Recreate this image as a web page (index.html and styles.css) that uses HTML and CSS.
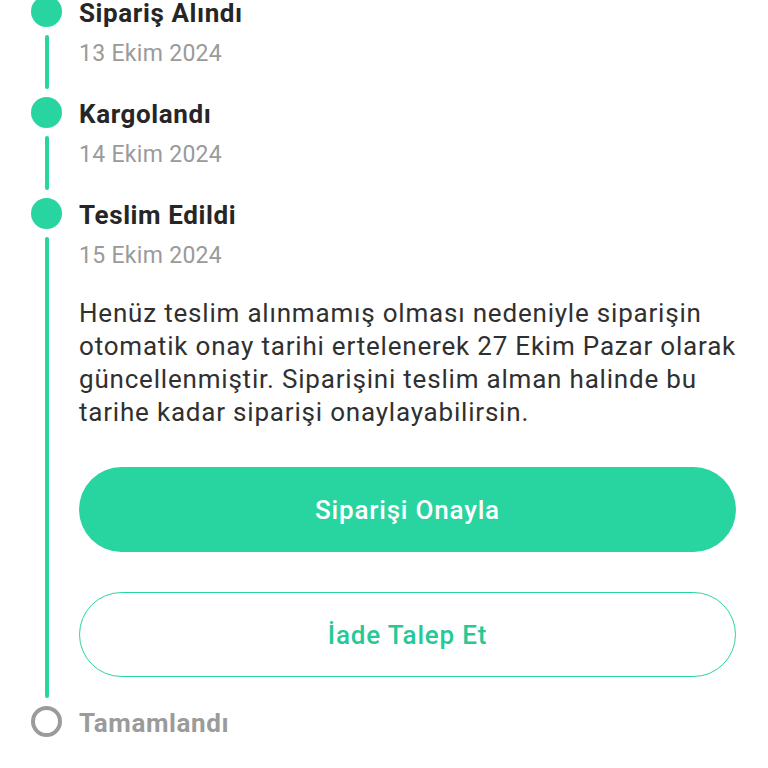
FILE: index.html
```html
<!DOCTYPE html>
<html lang="tr">
<head>
<meta charset="utf-8">
<link rel="stylesheet" href="styles.css">
</head>
<body>
<div class="timeline">
  <div class="item item-first">
    <div class="marker"><span class="dot"></span><span class="line"></span></div>
    <div class="content">
      <div class="title">Sipariş Alındı</div>
      <div class="date">13 Ekim 2024</div>
    </div>
  </div>
  <div class="item">
    <div class="marker"><span class="dot"></span><span class="line"></span></div>
    <div class="content">
      <div class="title">Kargolandı</div>
      <div class="date">14 Ekim 2024</div>
    </div>
  </div>
  <div class="item item-current">
    <div class="marker"><span class="dot"></span><span class="line"></span></div>
    <div class="content">
      <div class="title">Teslim Edildi</div>
      <div class="date">15 Ekim 2024</div>
      <p class="note">Henüz teslim alınmamış olması nedeniyle siparişin otomatik onay tarihi ertelenerek 27 Ekim Pazar olarak güncellenmiştir. Siparişini teslim alman halinde bu tarihe kadar siparişi onaylayabilirsin.</p>
      <button class="btn btn-primary">Siparişi Onayla</button>
      <button class="btn btn-outline">İade Talep Et</button>
    </div>
  </div>
  <div class="item item-pending">
    <div class="marker"><span class="dot dot-empty"></span></div>
    <div class="content">
      <div class="title">Tamamlandı</div>
    </div>
  </div>
</div>
</body>
</html>
```

FILE: styles.css
```css
* { box-sizing: border-box; }
html, body {
  margin: 0;
  padding: 0;
  background: #ffffff;
  font-family: Roboto, "Noto Sans", sans-serif;
  overflow: hidden;
}
.timeline {
  padding-left: 31px;
  padding-right: 32px;
}
.item {
  display: flex;
}
.marker {
  width: 31px;
  flex: 0 0 31px;
  margin-right: 17px;
  display: flex;
  flex-direction: column;
  align-items: center;
}
.dot {
  width: 31px;
  height: 31px;
  border-radius: 50%;
  background: #28d4a0;
  flex: 0 0 31px;
}
.dot-empty {
  background: transparent;
  border: 4px solid #9b9b9b;
}
.line {
  flex: 1;
  width: 4px;
  margin: 8px 0;
  border-radius: 2px;
  background: #28d4a0;
}
.content {
  flex: 1;
  min-width: 0;
  padding-bottom: 25px;
}
.title {
  font-size: 26px;
  font-weight: 700;
  letter-spacing: 0.6px;
  line-height: 34px;
  color: #262626;
}
.date {
  font-size: 23px;
  letter-spacing: 0.3px;
  line-height: 36px;
  margin-top: 6px;
  color: #9a9a9a;
}
.item-first .marker {
  margin-top: -4px;
}
.item-first .title {
  line-height: 26px;
}
.item-first .date {
  margin-top: 10px;
}
.note {
  margin: 23px -15px 0 0;
  font-size: 26px;
  letter-spacing: 0.8px;
  line-height: 33px;
  color: #303030;
}
.btn {
  display: block;
  width: 100%;
  height: 85px;
  border-radius: 43px;
  font-family: Roboto, "Noto Sans", sans-serif;
  font-size: 26px;
  font-weight: 500;
  letter-spacing: 0.8px;
  cursor: pointer;
}
.btn-primary {
  margin-top: 38px;
  background: #28d4a0;
  border: none;
  color: #ffffff;
}
.btn-outline {
  margin-top: 40px;
  background: #ffffff;
  border: 1.5px solid #28d4a0;
  color: #26c995;
}
.item-current .content {
  padding-bottom: 29px;
}
.item-pending .title {
  color: #9b9b9b;
}
```
